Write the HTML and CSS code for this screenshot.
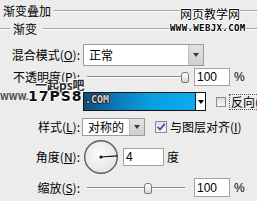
FILE: index.html
```html
<!DOCTYPE html>
<html>
<head>
<meta charset="utf-8">
<link rel="stylesheet" href="styles.css">
</head>
<body>
<div class="panel">
  <div class="legend-row outer"><span class="legend">渐变叠加</span><span class="rule"></span></div>
  <div class="legend-row inner"><span class="rule short"></span><span class="legend">渐变</span><span class="rule"></span></div>

  <div class="row r1">
    <span class="lbl">混合模式(<u>O</u>):</span>
    <div class="select sel-blend"><span class="val">正常</span><span class="btn"><i class="tri"></i></span></div>
  </div>

  <div class="row r2">
    <span class="lbl">不透明度(<u>P</u>):</span>
    <div class="slider"><span class="track"></span><span class="thumb" style="left:98px"></span></div>
    <div class="num">100</div><span class="pct">%</span>
  </div>

  <div class="row r3">
    <span class="lbl"></span>
    <div class="grad"><span class="grad-fill"></span><span class="grad-btn"><i class="tri dark"></i></span></div>
    <span class="chk"></span><span class="chk-lbl">反向(<u>R</u>)</span>
  </div>

  <div class="row r4">
    <span class="lbl">样式(<u>L</u>):</span>
    <div class="select sel-style"><span class="val">对称的</span><span class="btn"><i class="tri"></i></span></div>
    <span class="chk checked"><svg width="10" height="10" viewBox="0 0 10 10"><path d="M1.5 4.8 L4 7.5 L8.8 1.8" fill="none" stroke="#4b4ba6" stroke-width="1.8"/></svg></span>
    <span class="chk-lbl2">与图层对齐(<u>I</u>)</span>
  </div>

  <div class="row r5">
    <span class="lbl">角度(<u>N</u>):</span>
    <svg class="dial" width="36" height="36" viewBox="0 0 36 36">
      <defs><radialGradient id="dg" cx="45%" cy="40%" r="60%"><stop offset="0" stop-color="#fbfbfb"/><stop offset="1" stop-color="#e4e4e4"/></radialGradient></defs>
      <circle cx="18" cy="18" r="16.3" fill="url(#dg)" stroke="#5d5d66" stroke-width="1.4"/>
      <line x1="18" y1="18" x2="34.3" y2="16.9" stroke="#111" stroke-width="1.1"/>
      <circle cx="18" cy="18" r="1.6" fill="#111"/>
    </svg>
    <div class="num angle">4</div><span class="deg">度</span>
  </div>

  <div class="row r6">
    <span class="lbl">缩放(<u>S</u>):</span>
    <div class="slider"><span class="track"></span><span class="thumb" style="left:61px"></span></div>
    <div class="num">100</div><span class="pct">%</span>
  </div>

  <div class="watermark">
    <span class="wm-site">网页教学网</span>
    <span class="wm-url">WWW.WEBJX.COM</span>
    <span class="wm-cn">一起ps吧</span>
    <span class="wm-www">WWW.</span>
    <span class="wm-big">17PS8</span>
    <span class="wm-com">.COM</span>
  </div>
</div>
</body>
</html>
```

FILE: styles.css
```css
* { box-sizing: border-box; }
html, body { margin: 0; padding: 0; }
body {
  width: 257px;
  height: 201px;
  overflow: hidden;
  background: #ececec;
  font-family: "Noto Sans CJK SC", "Noto Sans", sans-serif;
  font-size: 12px;
  line-height: 14px;
  color: #000;
}
u { text-decoration: underline; text-underline-offset: 1px; }
.panel { position: relative; width: 257px; height: 201px; overflow: hidden; }

.legend-row { display: flex; align-items: center; }
.legend { white-space: nowrap; }
.rule {
  flex: 1;
  height: 2px;
  border-top: 1px solid #a4a4a4;
  border-bottom: 1px solid #ffffff;
}
.outer { height: 22px; padding-left: 3px; }
.outer .rule { margin-left: 3px; }
.inner { height: 14px; }
.inner .rule.short { flex: 0 0 10px; }
.inner .legend { margin: 0 6px 0 3px; }

.row { display: flex; align-items: center; white-space: nowrap; }
.lbl { flex: none; width: 80px; text-align: right; }
.r1 { margin-top: 8px; height: 22px; }
.r2 { margin-top: 2px; height: 18px; }
.r3 { margin-top: 6px; height: 19px; }
.r4 { margin-top: 7px; height: 18px; }
.r5 { margin-top: 3px; height: 36px; }
.r6 { margin-top: 3px; height: 19px; }

.select {
  display: flex;
  height: 100%;
  border: 1px solid #9c9c9c;
  background: #fff;
}
.sel-blend { width: 121px; margin-left: 3px; }
.sel-style { width: 63px; margin-left: 2px; }
.val { flex: 1; padding-left: 5px; display: flex; align-items: center; }
.btn {
  flex: none;
  width: 15px;
  background: linear-gradient(#e2e2e2, #cfcfcf);
  border-left: 1px solid #bdbdbd;
  display: flex;
  align-items: center;
  justify-content: center;
}
.tri {
  width: 0; height: 0;
  border-left: 3px solid transparent;
  border-right: 3px solid transparent;
  border-top: 4px solid #3a3a3a;
}
.tri.dark { border-top-color: #000; }

.slider {
  position: relative;
  flex: none;
  width: 106px;
  height: 100%;
  margin-left: 3px;
  padding-left: 4px;
  display: flex;
  align-items: center;
}
.track {
  width: 98px;
  height: 2px;
  border-top: 1px solid #8a8a8a;
  border-bottom: 1px solid #ffffff;
}
.thumb {
  position: absolute;
  top: 50%;
  width: 8px;
  height: 11px;
  margin-top: -5px;
  border: 1px solid #7a7a7a;
  border-radius: 3px 3px 2px 2px;
  background: linear-gradient(#ffffff, #d6d6d6);
}

.num {
  flex: none;
  width: 36px;
  height: 100%;
  margin-left: 5px;
  border: 1px solid #a3a3a3;
  background: #fff;
  font-family: "Liberation Sans", Arial, sans-serif;
  font-size: 12px;
  padding-left: 2px;
  display: flex;
  align-items: center;
}
.pct { margin-left: 4px; font-family: "Liberation Sans", Arial, sans-serif; }

.grad {
  flex: none;
  display: flex;
  width: 123px;
  height: 100%;
  margin-left: 3px;
  border: 1px solid #151515;
}
.grad-fill {
  flex: 1;
  background: linear-gradient(to right, #0f4c7c 0%, #0b7bbd 30%, #079fe0 60%, #0dabee 100%);
}
.grad-btn {
  flex: none;
  width: 10px;
  background: #fff;
  border-left: 1px solid #151515;
  display: flex;
  align-items: center;
  justify-content: center;
}
.chk {
  flex: none;
  width: 10px;
  height: 10px;
  margin-left: 10px;
  border: 1px solid #8c8c8c;
  background: linear-gradient(#dcdcdc, #f7f7f7);
}
.chk-lbl {
  margin-left: 3px;
  padding: 0 1px;
  border: 1px dotted #555;
  line-height: 14px;
}
.chk.checked {
  width: 12px;
  height: 12px;
  background: linear-gradient(#dedef0, #f4f4fa);
  display: flex;
  align-items: center;
  justify-content: center;
}
.chk-lbl2 { margin-left: 3px; }

.dial { flex: none; margin-left: 3px; }
.num.angle { width: 41px; height: 18px; margin-left: 4px; }
.deg { margin-left: 3px; }

.watermark { position: absolute; left: 0; top: 0; width: 257px; height: 201px; pointer-events: none; }
.watermark span { position: absolute; white-space: nowrap; }
.wm-site {
  left: 180px; top: 8px;
  font-size: 12px; line-height: 12px;
  text-shadow: 1px 0 #fff, -1px 0 #fff, 0 1px #fff, 0 -1px #fff;
}
.wm-url {
  left: 170px; top: 24px;
  font-family: "DejaVu Sans Mono", monospace;
  font-weight: bold;
  font-size: 9px; line-height: 9px;
  letter-spacing: 0.4px;
  text-shadow: 1px 0 #fff, -1px 0 #fff, 0 1px #fff, 0 -1px #fff;
}
.wm-cn {
  left: 35px; top: 78px;
  font-size: 12px; line-height: 14px; font-weight: bold;
  color: #2a2a2a;
  text-shadow: 1px 0 #fff, -1px 0 #fff, 0 1px #fff, 0 -1px #fff;
}
.wm-www {
  left: 0; top: 93px;
  font-family: "DejaVu Sans", sans-serif; font-weight: bold;
  font-size: 8px; line-height: 9px;
  color: #555;
}
.wm-big {
  left: 28px; top: 89px;
  font-family: "DejaVu Sans", sans-serif; font-weight: bold;
  font-size: 14px; line-height: 14px;
  letter-spacing: 1px;
  color: #111;
  text-shadow: 1px 0 #fff, -1px 0 #fff, 0 1px #fff, 0 -1px #fff;
}
.wm-com {
  left: 85px; top: 95px;
  font-family: "DejaVu Sans Mono", monospace; font-weight: bold;
  font-size: 10px; line-height: 10px;
  color: #d0d0d0;
  text-shadow: 1px 0 #222, -1px 0 #222, 0 1px #222, 0 -1px #222;
}
```
